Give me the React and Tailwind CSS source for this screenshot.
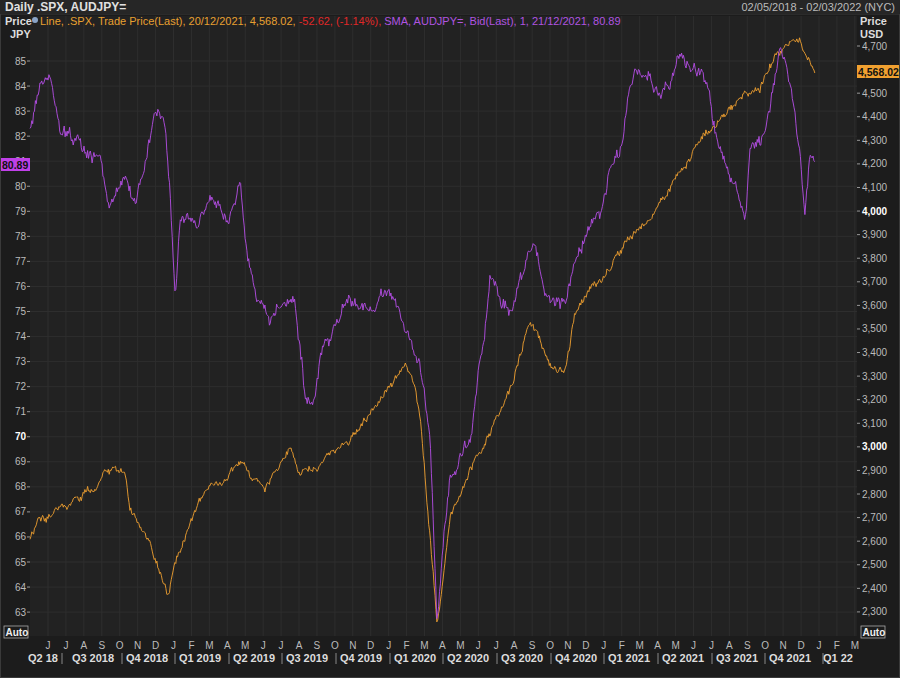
import React from "react";

const O = [[30,540],[40,515],[60,510],[90,490],[115,465],[125,470],[130,510],[150,545],[168,598],[175,560],[200,500],[230,470],[245,470],[265,490],[290,445],[300,470],[320,465],[350,440],[380,400],[405,365],[415,385],[420,420],[432,560],[437,625],[442,590],[450,520],[470,470],[490,430],[510,390],[530,320],[540,340],[550,365],[565,370],[575,310],[600,280],[630,240],[650,220],[680,170],[700,140],[720,120],[740,100],[760,85],[775,60],[785,45],[800,40],[810,60],[815,72]];
const P = [[30,130],[40,90],[50,80],[60,130],[80,150],[100,160],[110,210],[125,175],[135,200],[145,170],[155,120],[165,130],[170,190],[175,300],[180,230],[190,220],[200,220],[210,200],[230,220],[240,180],[245,240],[255,290],[270,320],[285,300],[295,300],[305,390],[315,400],[320,360],[335,330],[345,300],[360,310],[375,300],[385,285],[395,300],[405,330],[415,350],[420,360],[430,440],[437,620],[442,560],[450,480],[470,440],[485,330],[490,270],[500,300],[510,310],[520,280],[535,240],[540,270],[550,300],[565,300],[580,250],[600,210],[610,170],[620,150],[630,90],[640,70],[650,80],[660,100],[680,60],[700,70],[710,100],[720,150],[740,200],[745,220],[750,150],[760,140],[770,110],[780,45],[790,80],[800,150],[805,210],[810,150],[815,165]];

function mk(pts, amp, fast, seed) {
  let s = seed;
  const r = () => { s = (s * 16807) % 2147483647; return s / 2147483647 - 0.5; };
  const out = [];
  let n = 0;
  for (let x = 30; x <= 815; x += 0.9) {
    let i = 0;
    while (i < pts.length - 2 && pts[i + 1][0] < x) i++;
    const [x0, y0] = pts[i], [x1, y1] = pts[i + 1];
    const y = y0 + ((y1 - y0) * (x - x0)) / (x1 - x0 || 1);
    n = n * 0.8 + r() * amp;
    out.push(`${x.toFixed(1)},${(y + n + r() * fast).toFixed(1)}`);
  }
  return out.join(" ");
}
const oLine = mk(O, 5, 4, 12345);
const pLine = mk(P, 8, 7, 67891);

const months = "JJASONDJFMAMJJASONDJFMAMJJASONDJFMAMJJASONDJFM".split("");
const quarters = [["Q2 18",43],["Q3 2018",93],["Q4 2018",147],["Q1 2019",200],["Q2 2019",254],["Q3 2019",307],["Q4 2019",361],["Q1 2020",415],["Q2 2020",468],["Q3 2020",522],["Q4 2020",576],["Q1 2021",629],["Q2 2021",683],["Q3 2021",737],["Q4 2021",790],["Q1 22",838]];
const seps = [62,122,175,229,282,336,390,443,497,551,604,658,712,765,823];
const F = "'Liberation Sans', Arial, sans-serif";

export default function App() {
  const left = [];
  for (let v = 85; v >= 63; v--) left.push(v);
  const right = [];
  for (let v = 4700; v >= 2300; v -= 100) right.push(v);
  const ly = (v) => 61 + (85 - v) * 25.05;
  const ry = (v) => 46 + ((4700 - v) / 100) * 23.58;
  return (
    <div className="w-[900px] h-[678px] bg-[#1c1c1c] text-[#c8c8c8] overflow-hidden" style={{ fontFamily: F }}>
      <div className="h-[14px] flex items-center justify-between px-[5px] text-[12px] bg-[#262626]">
        <span className="font-bold text-[#e0e0e0]">Daily .SPX, AUDJPY=</span>
        <span className="text-[11px] text-[#bbb]">02/05/2018 - 02/03/2022 (NYC)</span>
      </div>
      <svg width="900" height="664" viewBox="0 14 900 664" className="block" fontFamily={F}>
        <rect x="30" y="16" width="827" height="620" fill="#222222" />
        {months.map((m, i) => (
          <line key={"v" + i} x1={48 + i * 17.93} x2={48 + i * 17.93} y1="16" y2="636" stroke="#2e2e2e" strokeWidth="1" />
        ))}
        {left.map((v) => (
          <line key={"h" + v} x1="30" x2="857" y1={ly(v)} y2={ly(v)} stroke="#2e2e2e" strokeWidth="1" />
        ))}
        <polyline points={oLine} fill="none" stroke="#f0a030" strokeWidth="0.9" />
        <polyline points={pLine} fill="none" stroke="#b54ee6" strokeWidth="0.9" />
        <circle cx="35" cy="20" r="3" fill="#8aa4c8" />
        <text x="40" y="25" fontSize="11">
          <tspan fill="#e8a030">Line, .SPX, Trade Price(Last), 20/12/2021, 4,568.02, </tspan>
          <tspan fill="#e02828">-52.62, (-1.14%), </tspan>
          <tspan fill="#b054e0">SMA, AUDJPY=, Bid(Last),  1, 21/12/2021, 80.89</tspan>
        </text>
        <text x="5" y="25" fontSize="11" fontWeight="bold" fill="#ddd">Price</text>
        <text x="10" y="38" fontSize="11" fontWeight="bold" fill="#ddd">JPY</text>
        <text x="860" y="25" fontSize="11" fontWeight="bold" fill="#ddd">Price</text>
        <text x="860" y="38" fontSize="11" fontWeight="bold" fill="#ddd">USD</text>
        {left.map((v) => (
          <g key={"l" + v}>
            <text x="26" y={ly(v) + 3.5} fontSize="10" textAnchor="end" fill={v === 70 ? "#fff" : "#bbb"} fontWeight={v === 70 ? "bold" : "normal"}>{v}</text>
            <line x1="27" x2="30" y1={ly(v)} y2={ly(v)} stroke="#999" />
          </g>
        ))}
        {right.map((v) => (
          <g key={"r" + v}>
            <line x1="857" x2="860" y1={ry(v)} y2={ry(v)} stroke="#999" />
            {!(v === 4600) && (
              <text x="862" y={ry(v) + 3.5} fontSize="10" fill={v % 1000 === 0 ? "#fff" : "#bbb"} fontWeight={v % 1000 === 0 ? "bold" : "normal"}>{v.toLocaleString("en-US")}</text>
            )}
          </g>
        ))}
        <rect x="0" y="158" width="30" height="13" fill="#c040e8" />
        <text x="2" y="168.5" fontSize="10.5" fontWeight="bold" fill="#111">80.89</text>
        <rect x="857" y="65" width="43" height="13" fill="#f0a030" />
        <text x="858" y="75.5" fontSize="10.5" fontWeight="bold" fill="#111">4,568.02</text>
        <rect x="4" y="626" width="24" height="12" fill="#1c1c1c" stroke="#aaa" strokeWidth="0.8" />
        <text x="5.5" y="635.5" fontSize="10" fontWeight="bold" fill="#eee">Auto</text>
        <rect x="861" y="626" width="24" height="12" fill="#1c1c1c" stroke="#aaa" strokeWidth="0.8" />
        <text x="862.5" y="635.5" fontSize="10" fontWeight="bold" fill="#eee">Auto</text>
        {months.map((m, i) => (
          <text key={"m" + i} x={48 + i * 17.93} y="649" fontSize="10" textAnchor="middle" fill="#bbb">{m}</text>
        ))}
        {quarters.map(([q, x]) => (
          <text key={q} x={x} y="662" fontSize="11" fontWeight="bold" fill="#ddd" textAnchor="middle">{q}</text>
        ))}
        {seps.map((x) => (
          <line key={"s" + x} x1={x} x2={x} y1="653" y2="664" stroke="#888" />
        ))}
        <rect x="0.5" y="14" width="899" height="663.5" fill="none" stroke="#3a3a3a" />
      </svg>
    </div>
  );
}
